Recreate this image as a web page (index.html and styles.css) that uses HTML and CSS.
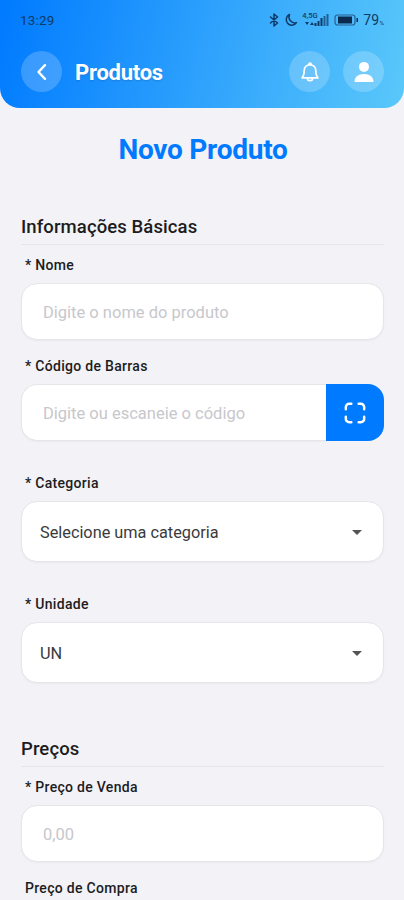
FILE: index.html
```
<!doctype html>
<html lang="pt-BR">
<head>
<meta charset="utf-8">
<meta name="viewport" content="width=device-width, initial-scale=1">
<title>Novo Produto</title>
<link rel="stylesheet" href="styles.css">
</head>
<body>

<header class="topbar">
  <div class="status">
    <span class="clock">13:29</span>
    <div class="status-icons">
      <svg class="bt" width="10" height="14" viewBox="0 0 10 14"><path d="M1.500 4l7 6L5 13V1l3.500 3-7 6"/></svg>
      <svg class="moon" width="14" height="14" viewBox="0 0 14 14"><path d="M5.5 1.5a5.6 5.6 0 1 0 7 8.2A6 6 0 0 1 5.5 1.5z"/></svg>
      <div class="network">
        <span class="net-type">4,5G</span>
        <svg width="28" height="14" viewBox="0 0 28 14"><path d="M3 9h4l-2 3zM8 12l2-3 2 3zM12.500 10h2v3h-2zM15.500 8h2v5h-2zM18.500 5h2v8h-2z"/><path class="dim" d="M21.500 3h2v10h-2zM24.500 1h2v12h-2z"/></svg>
      </div>
      <svg class="battery" width="25" height="12" viewBox="0 0 25 12"><rect x="1" y="1" width="20" height="10" rx="2.500"/><path class="fill" d="M4 2.500h14v7H4zM22.500 4h1.500v4h-1.500z"/></svg>
      <span class="level">79<small>%</small></span>
    </div>
  </div>
  <nav class="nav">
    <button class="round" aria-label="Voltar">
      <svg width="20" height="20" viewBox="0 0 20 20"><path d="M13 3.200 6.500 10l6.500 6.800"/></svg>
    </button>
    <span class="nav-title">Produtos</span>
    <button class="round" aria-label="Notificações">
      <svg class="bell" width="22" height="22" viewBox="0 0 22 22"><path d="M3 16.800c1.700-1.600 2.200-3.800 2.200-7.200 0-3.200 2.100-5.800 5.800-5.800s5.800 2.600 5.800 5.800c0 3.400.5 5.600 2.200 7.200zM9.800 3.500c0-1.800 2.400-1.800 2.400 0M8.300 17c0 3.600 5.400 3.600 5.400 0"/></svg>
    </button>
    <button class="round" aria-label="Perfil">
      <svg class="user" width="22" height="22" viewBox="0 0 22 22"><circle cx="11" cy="5.900" r="5"/><path d="M1.500 21c0-5.200 3.800-8 9.500-8s9.500 2.800 9.500 8z"/></svg>
    </button>
  </nav>
</header>

<main>
  <h1>Novo Produto</h1>

  <form>
    <section>
      <h2>Informações Básicas</h2>
      <div class="field">
        <label for="nome">* Nome</label>
        <input type="text" id="nome" placeholder="Digite o nome do produto">
      </div>
      <div class="field wide">
        <label for="codigo">* Código de Barras</label>
        <div class="scan">
          <input type="text" id="codigo" placeholder="Digite ou escaneie o código">
          <button type="button" class="scan-btn" aria-label="Escanear">
            <svg width="22" height="22" viewBox="0 0 24 24"><path d="M2 8V5.500A3.500 3.500 0 0 1 5.500 2H8M16 2h2.500A3.500 3.500 0 0 1 22 5.500V8M22 16v2.500a3.500 3.500 0 0 1-3.500 3.500H16M8 22H5.500A3.500 3.500 0 0 1 2 18.500V16"/></svg>
          </button>
        </div>
      </div>
      <div class="field wide">
        <label>* Categoria</label>
        <div class="select">Selecione uma categoria</div>
      </div>
      <div class="field">
        <label>* Unidade</label>
        <div class="select">UN</div>
      </div>
    </section>

    <section>
      <h2>Preços</h2>
      <div class="field">
        <label for="venda">* Preço de Venda</label>
        <input type="text" id="venda" placeholder="0,00">
      </div>
      <div class="field last">
        <label>Preço de Compra</label>
      </div>
    </section>
  </form>
</main>

</body>
</html>
```
FILE: styles.css
```
* { box-sizing:border-box }
body { margin:0; background:#f2f2f7; color:#1c1c1e; font-family:Roboto, sans-serif }
button { border:0; padding:0; font:inherit }
svg { display:block; fill:none; stroke-linecap:round; stroke-linejoin:round }

.topbar { height:108px; border-radius:0 0 20px 20px; background:linear-gradient(103deg, #007aff, #5ac8fa) }
.status { display:flex; justify-content:space-between; height:40px; padding:0 20px; align-items:center; font-size:13px; color:#103a66 }
.clock { font-size:13.500px; letter-spacing:.2px }
.status-icons { display:flex; align-items:center }
.bt { stroke:#103a66; stroke-width:1.500 }
.moon { margin-left:5px; stroke:#103a66; stroke-width:1.500 }
.network { position:relative; margin-left:4px }
.network svg { fill:#103a66 }
.network .dim { opacity:.7 }
.net-type { position:absolute; left:0; top:-1px; font-size:7.500px; line-height:8px; font-weight:500 }
.battery { margin-left:4px; stroke:#2a5f90; stroke-width:1.200 }
.battery .fill { fill:#0c2b4c; stroke:none }
.level { margin-left:4px; letter-spacing:.2px; font-size:14px }
.level small { font-size:6px }

.nav { display:flex; align-items:center; padding:11px 20px 0 21px }
.nav-title { flex:1; margin-left:13px; color:#fff; font-size:22px; font-weight:700; letter-spacing:-.25px; line-height:28px; padding-top:2px; text-shadow:0 1px 2px rgba(0,0,0,.15) }
.round { display:flex; align-items:center; justify-content:center; width:41px; height:41px; border-radius:50%; background:rgba(255,255,255,.2) }
.round + .round { margin-left:13px }
.round svg { stroke:#fff; stroke-width:2.400 }
.round .bell { stroke-width:1.700 }
.round .user { fill:#fff; stroke:none }

h1 { margin:24px 0 0; padding-left:2px; text-align:center; color:#007aff; font-size:28px; line-height:36px; font-weight:700; letter-spacing:-.25px }
form { padding:46px 20px 0 21px }
h2 { margin:0 0 11px; height:31px; border-bottom:1px solid #e6e6ea; font-size:18.500px; line-height:26px; font-weight:500; letter-spacing:.1px }
section + section { margin-top:53px }
.field { margin-bottom:17px }
.field.wide { margin-bottom:33px }
.field.last { margin-bottom:0 }
.last label { margin-bottom:0 }
label { display:block; margin-bottom:8px; padding-left:4px; font-size:14px; line-height:19px; font-weight:500; letter-spacing:.3px }
input, .select { display:block; width:100%; height:57px; border:1px solid #e5e5ea; border-radius:16px; background:#fff; padding:2px 21px 0; font:16.500px Roboto, sans-serif; color:#1c1c1e; box-shadow:0 1px 2px rgba(0,0,0,.04) }
input::placeholder { color:#c7c7cc; opacity:1 }
.scan { display:flex }
.scan input { flex:1; min-width:0; border-right:0; border-radius:16px 0 0 16px }
.scan-btn { display:flex; align-items:center; justify-content:center; width:58px; border-radius:0 16px 16px 0; background:#007aff }
.scan-btn svg { stroke:#fff; stroke-width:2.700 }
.select { display:flex; align-items:center; justify-content:space-between; height:61px; padding:2px 21px 0 18px; font-size:16.300px; color:#3a3a3c }
.select::after { content:""; border:5px solid transparent; border-top-color:#555; border-bottom:0 }
```
